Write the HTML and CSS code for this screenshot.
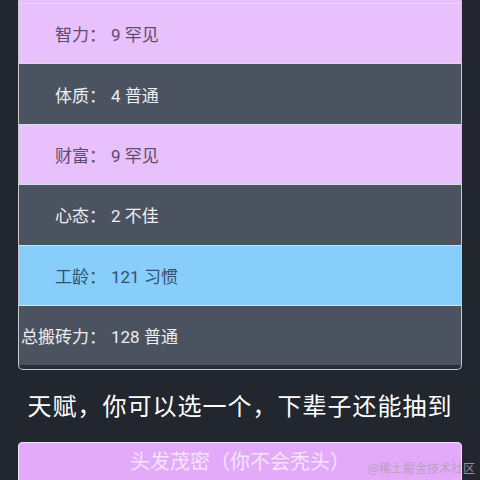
FILE: index.html
```html
<!DOCTYPE html>
<html lang="zh">
<head>
<meta charset="utf-8">
<link rel="stylesheet" href="styles.css">
</head>
<body>
<div class="page">
  <div class="panel">
    <div class="stub"></div>
    <div class="row pink"><span class="label">智力：</span><span class="value">9 罕见</span></div>
    <div class="row dark"><span class="label">体质：</span><span class="value">4 普通</span></div>
    <div class="row pink"><span class="label">财富：</span><span class="value">9 罕见</span></div>
    <div class="row dark"><span class="label">心态：</span><span class="value">2 不佳</span></div>
    <div class="row blue"><span class="label">工龄：</span><span class="value">121 习惯</span></div>
    <div class="row dark last"><span class="label">总搬砖力：</span><span class="value">128 普通</span></div>
  </div>
  <div class="title">天赋，你可以选一个，下辈子还能抽到</div>
  <div class="talent">头发茂密（你不会秃头）</div>
</div>
<div class="watermark">@稀土掘金技术社区</div>
</body>
</html>
```
FILE: styles.css
```css
html, body {
  margin: 0;
  padding: 0;
  height: 100%;
  overflow: hidden;
}
body {
  background: #22262e;
  font-family: Roboto, "Noto Sans CJK SC", sans-serif;
  position: relative;
}
.page {
  padding: 0 18px;
}
.panel {
  border: 1px solid #c4c8d0;
  border-top: none;
  border-radius: 0 0 5px 5px;
  background: #2a2f37;
  padding-bottom: 4px;
  overflow: hidden;
}
.stub {
  height: 3px;
  background: #e8c0fc;
  border-bottom: 1px solid #e4dcea;
}
.row {
  height: 59.4px;
  border-bottom: 1px solid #dcdce4;
  display: flex;
  align-items: center;
  font-size: 17px;
}
.row.last {
  border-bottom: none;
}
.label {
  width: 87px;
  text-align: right;
  white-space: nowrap;
  flex: none;
}
.value {
  padding-left: 5px;
}
.pink {
  background: #e8c0fc;
  color: #5c4c6e;
}
.dark {
  background: #4b5360;
  color: #eceef2;
}
.blue {
  background: #87cefa;
  color: #33506e;
}
.title {
  margin-top: 21px;
  text-align: center;
  color: #ffffff;
  font-size: 24px;
  letter-spacing: 1px;
  line-height: 32px;
}
.talent {
  margin-top: 19px;
  background: #e2aaf8;
  border: 1px solid #ece4f2;
  border-radius: 4px;
  color: #f6e4fd;
  text-align: center;
  font-size: 20px;
  line-height: 28px;
  padding: 5px 0 20px;
}
.watermark {
  position: absolute;
  right: 5px;
  bottom: 4px;
  font-size: 12px;
  color: rgba(170, 160, 185, 0.85);
  font-family: "Noto Sans CJK SC", sans-serif;
}
```
